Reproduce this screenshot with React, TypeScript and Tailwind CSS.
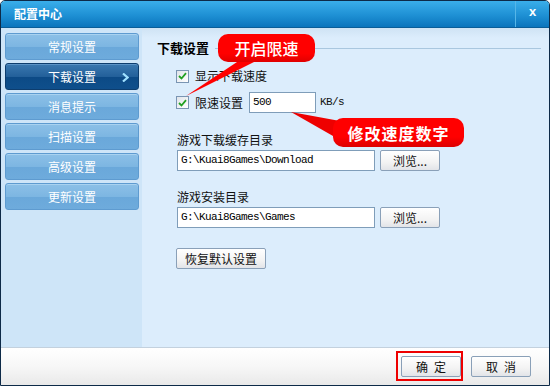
import React from 'react';

const cjk = "font-['Noto_Sans_CJK_SC',sans-serif]";
const mono = "font-['Liberation_Mono','Noto_Sans_CJK_SC',monospace] text-[11px] tracking-[-0.6px]";

const navItems = ['常规设置', '下载设置', '消息提示', '扫描设置', '高级设置', '更新设置'];

function NavItem({ label, active }: { label: string; active?: boolean }) {
  const look = active
    ? 'border-[#0d3d6e] bg-[linear-gradient(to_bottom,#3a78b0_0%,#23609a_50%,#0c4a86_52%,#0f4f8c_100%)] shadow-[inset_0_1px_0_#5b93c6]'
    : 'border-[#5e9bd0] bg-[linear-gradient(to_bottom,#8cc0e7_0%,#7db6e2_50%,#6aa8da_52%,#6eabdc_100%)] shadow-[inset_0_1px_0_#a9d2f0]';
  return (
    <div className={`relative h-[27px] rounded-[3px] border flex items-center justify-center text-white text-[12px] ${look}`}>
      <span>{label}</span>
      {active && (
        <svg className="absolute right-[9px] top-[9px]" width="7" height="9" viewBox="0 0 7 9">
          <path d="M1 0.5 L5.5 4.5 L1 8.5" fill="none" stroke="#9fe0ff" strokeWidth="2.2" />
        </svg>
      )}
    </div>
  );
}

function CheckBox() {
  return (
    <div className="w-[13px] h-[13px] border border-[#7a95b3] bg-[linear-gradient(to_bottom_right,#e0e4ea,#ffffff)] flex items-center justify-center">
      <svg width="9" height="8" viewBox="0 0 9 8">
        <path d="M1 4 L3.5 6.5 L8 1.2" fill="none" stroke="#22a022" strokeWidth="1.8" />
      </svg>
    </div>
  );
}

function Btn({ children, className = '' }: { children: React.ReactNode; className?: string }) {
  return (
    <div
      className={`h-[21px] rounded-[2px] border border-[#8aa0b8] bg-[linear-gradient(to_bottom,#ffffff,#f3f3f3_60%,#e2e4e8)] flex items-center justify-center text-[12px] text-[#111] ${className}`}
    >
      {children}
    </div>
  );
}

function PathInput({ value }: { value: string }) {
  return (
    <div className={`w-[198px] h-[21px] border border-[#7f9db9] bg-white flex items-center pl-[3px] text-black ${mono}`}>
      {value}
    </div>
  );
}

export default function App() {
  return (
    <div className={`relative w-[550px] h-[386px] overflow-hidden ${cjk}`}>
      <div className="w-full h-full flex flex-col border border-[#0d2a48] rounded-t-[5px] overflow-hidden">
        {/* title bar */}
        <div className="h-[27px] flex items-center justify-between bg-[linear-gradient(to_bottom,#3aaeea,#1e90d4_55%,#0b74bc)] border-b border-[#0a5d98]">
          <span className="pl-[13px] text-white text-[12px] font-bold">配置中心</span>
          <div className="h-full w-[34px] border-l border-[#56b6e8] flex items-start justify-center pt-[4px]">
            <span className="text-white text-[13px] font-bold font-['Liberation_Sans',sans-serif] leading-[14px]">x</span>
          </div>
        </div>

        {/* body */}
        <div className="flex-1 flex bg-[#dcedfc]">
          <div className="w-[141px] bg-[#cee5f8] pt-[5px] pl-[4px] pr-[3px] flex flex-col gap-[3px]">
            {navItems.map((n, i) => (
              <NavItem key={n} label={n} active={i === 1} />
            ))}
          </div>

          <div className="flex-1 flex flex-col pl-[15px] text-[12px] text-[#111] bg-[linear-gradient(to_bottom,#cfe3f4,#dcedfc_10px)]">
            <div className="mt-[12px] h-[16px] flex items-center">
              <span className="text-[13px] font-bold text-black">下载设置</span>
              <div className="flex-1 ml-[6px] mr-[8px] h-px bg-[#a9c7df]" />
            </div>

            <div className="mt-[13px] ml-[19px] h-[14px] flex items-center gap-[6px]">
              <CheckBox />
              <span>显示下载速度</span>
            </div>

            <div className="mt-[9px] ml-[19px] h-[21px] flex items-center">
              <CheckBox />
              <span className="ml-[6px]">限速设置</span>
              <div className={`ml-[6px] w-[67px] h-[21px] border border-[#7f9db9] bg-white flex items-center pl-[3px] text-black ${mono}`}>500</div>
              <span className={`ml-[4px] ${mono}`}>KB/s</span>
            </div>

            <div className="mt-[19px] ml-[20px] h-[16px] flex items-center">游戏下载缓存目录</div>
            <div className="mt-[2px] ml-[20px] flex items-center gap-[5px]">
              <PathInput value="G:\Kuai8Games\Download" />
              <Btn className="w-[60px]">浏览...</Btn>
            </div>

            <div className="mt-[18px] ml-[20px] h-[16px] flex items-center">游戏安装目录</div>
            <div className="mt-[2px] ml-[20px] flex items-center gap-[5px]">
              <PathInput value="G:\Kuai8Games\Games" />
              <Btn className="w-[60px]">浏览...</Btn>
            </div>

            <div className="mt-[20px] ml-[19px]">
              <Btn className="w-[90px] h-[20px]">恢复默认设置</Btn>
            </div>
          </div>
        </div>

        {/* bottom bar */}
        <div className="h-[38px] border-t border-[#c3d1de] bg-[linear-gradient(to_bottom,#ffffff,#f7f7f7_50%,#e9e9e9)] flex items-center justify-end pr-[18px] gap-[10px]">
          <Btn className="w-[60px] h-[20px] tracking-[6px] pl-[6px]">确定</Btn>
          <Btn className="w-[60px] h-[20px] tracking-[6px] pl-[6px]">取消</Btn>
        </div>
      </div>

      {/* annotations */}
      <svg className="absolute inset-0 pointer-events-none" width="550" height="386">
        <polygon points="243,58 262,58 186,96" fill="#ff0000" />
        <polygon points="340,121 340,140 291,112" fill="#ee0000" />
      </svg>
      <div className="absolute left-[218px] top-[34px] w-[97px] h-[28px] rounded-[10px] bg-[linear-gradient(to_bottom,#ff0000_70%,#e00000)] flex items-center justify-center text-white text-[16px] font-medium">
        开启限速
      </div>
      <div className="absolute left-[333px] top-[118px] w-[131px] h-[29px] rounded-[10px] bg-[linear-gradient(to_bottom,#ff0000_65%,#dd0000)] flex items-center justify-center text-white text-[16px] font-bold tracking-[1px]">
        修改速度数字
      </div>
      <div className="absolute left-[396px] top-[351px] w-[67px] h-[30px] border-2 border-[#ee0000]" />
    </div>
  );
}
